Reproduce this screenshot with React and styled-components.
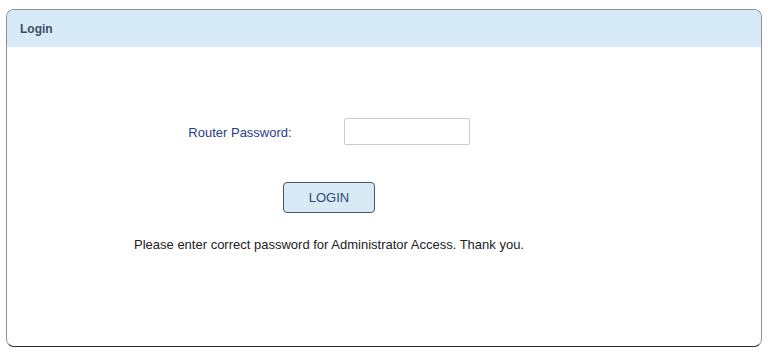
import React from 'react'
import styled, { createGlobalStyle } from 'styled-components'

const GlobalStyle = createGlobalStyle`
    body {
        margin: 0;
        background: #ffffff;
        font-family: "Liberation Sans", Arial, sans-serif;
    }
`

function App() {
    return (
        <>
            <GlobalStyle />
            <Page>
                <Panel>
                    <PanelHeader>Login</PanelHeader>
                    <PanelBody>
                        <FormRow>
                            <Label htmlFor="pwd">Router Password:</Label>
                            <PasswordInput id="pwd" type="password" />
                        </FormRow>
                        <LoginButton type="button">LOGIN</LoginButton>
                        <Message>Please enter correct password for Administrator Access. Thank you.</Message>
                    </PanelBody>
                </Panel>
            </Page>
        </>
    )
}

const Page = styled.div`
    padding: 9px 6px 0 6px;
`

const Panel = styled.div`
    box-sizing: border-box;
    width: 756px;
    height: 338px;
    border: 1px solid #8d929b;
    border-bottom-color: #2a2a2a;
    border-radius: 8px;
    overflow: hidden;
    background: #ffffff;
`

const PanelHeader = styled.div`
    height: 37px;
    display: flex;
    align-items: center;
    padding-left: 13px;
    background: #d6ebf7;
    color: #3b4e61;
    font-size: 12px;
    font-weight: bold;
`

const PanelBody = styled.div`
    width: 644px;
    display: flex;
    flex-direction: column;
    align-items: center;
    padding-top: 71px;
`

const FormRow = styled.div`
    display: flex;
    align-items: center;
    gap: 52px;
    height: 27px;
`

const Label = styled.label`
    color: #1f3d8a;
    font-size: 13px;
    padding-top: 1px;
`

const PasswordInput = styled.input`
    box-sizing: border-box;
    width: 126px;
    height: 27px;
    border: 1px solid #cbcbcb;
    border-radius: 2px;
    background: #ffffff;
    outline: none;
`

const LoginButton = styled.button`
    box-sizing: border-box;
    margin-top: 37px;
    width: 92px;
    height: 31px;
    border: 1px solid #46566a;
    border-radius: 4px;
    background: #d9eaf7;
    color: #2c4872;
    font-family: "Liberation Sans", Arial, sans-serif;
    font-size: 13px;
`

const Message = styled.div`
    margin-top: 24px;
    color: #222222;
    font-size: 13px;
    line-height: 15px;
`

export default App
